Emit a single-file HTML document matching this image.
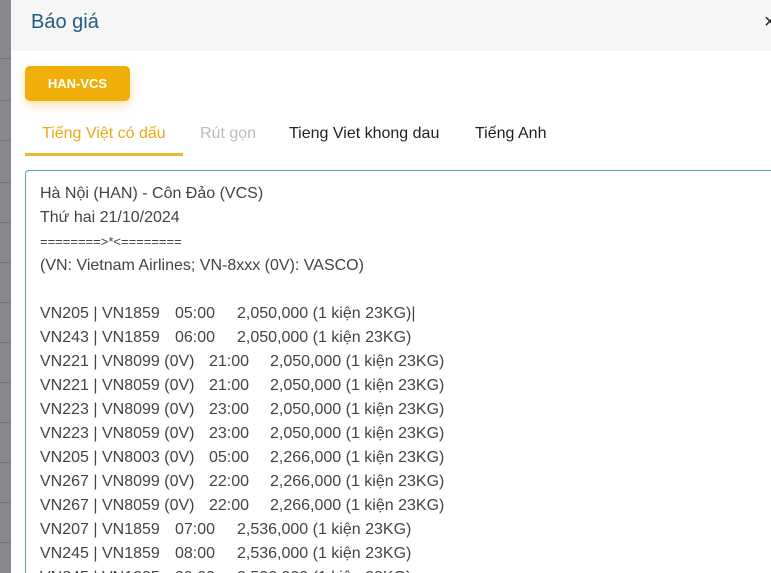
<!DOCTYPE html>
<html style="width:771px;height:573px;overflow:hidden"><head><meta charset="utf-8"><style>
*{margin:0;padding:0;box-sizing:border-box}
body{width:771px;height:573px;overflow:hidden;background:#fff;position:relative;font-family:"Liberation Sans",sans-serif}
.strip{position:absolute;left:0;top:0;width:11px;height:573px;background:#86888b}
.strip i{position:absolute;left:0;width:11px;height:1px;background:#707274}
.hdr{position:absolute;left:11px;top:0;width:760px;height:51px;background:#f6f6f6}
.title{position:absolute;left:31px;top:11px;font-size:20px;color:#1f5e7e}
.x{position:absolute;left:764px;top:11px;font-size:20px;color:#222}
.btn{position:absolute;left:25px;top:66px;width:105px;height:35px;background:#f0ae0a;border-radius:5px;color:#fff;font-weight:bold;font-size:13px;text-align:center;line-height:35px;box-shadow:0 4px 10px rgba(240,174,10,.35)}
.tab{position:absolute;top:125px;font-size:16px}
.ul{position:absolute;left:25px;top:153px;width:158px;height:3px;background:#ecb83a}
.box{position:absolute;left:25px;top:170px;width:780px;height:420px;border:1px solid #5b9cc4;border-radius:4px}
.l{position:absolute;font-size:16px;color:#444;white-space:pre;line-height:18px}
</style></head><body>
<div class="strip"><i style="top:58px"></i><i style="top:100px"></i><i style="top:140px"></i><i style="top:182px"></i><i style="top:222px"></i><i style="top:262px"></i><i style="top:302px"></i><i style="top:342px"></i><i style="top:382px"></i><i style="top:422px"></i><i style="top:462px"></i><i style="top:502px"></i><i style="top:542px"></i></div>
<div class="hdr"></div>
<div class="title">Báo giá</div>
<div class="x">×</div>
<div class="btn">HAN-VCS</div>
<div class="tab" style="left:42px;color:#eaa915">Tiếng Việt có dấu</div>
<div class="tab" style="left:200px;color:#b8bcc2">Rút gọn</div>
<div class="tab" style="left:289px;color:#222">Tieng Viet khong dau</div>
<div class="tab" style="left:475px;color:#222">Tiếng Anh</div>
<div class="ul"></div>
<div class="box"></div>
<div class="l" style="left:40px;top:185px">Hà Nội (HAN) - Côn Đảo (VCS)</div>
<div class="l" style="left:40px;top:209px">Thứ hai 21/10/2024</div>
<div class="l" style="left:40px;top:233px;font-size:13px">========&gt;*&lt;========</div>
<div class="l" style="left:40px;top:257px">(VN: Vietnam Airlines; VN-8xxx (0V): VASCO)</div>
<div id="rows"></div>
<script>
var rows=[
["VN205 | VN1859","05:00","2,050,000 (1 kiện 23KG)|",0],
["VN243 | VN1859","06:00","2,050,000 (1 kiện 23KG)",0],
["VN221 | VN8099 (0V)","21:00","2,050,000 (1 kiện 23KG)",1],
["VN221 | VN8059 (0V)","21:00","2,050,000 (1 kiện 23KG)",1],
["VN223 | VN8099 (0V)","23:00","2,050,000 (1 kiện 23KG)",1],
["VN223 | VN8059 (0V)","23:00","2,050,000 (1 kiện 23KG)",1],
["VN205 | VN8003 (0V)","05:00","2,266,000 (1 kiện 23KG)",1],
["VN267 | VN8099 (0V)","22:00","2,266,000 (1 kiện 23KG)",1],
["VN267 | VN8059 (0V)","22:00","2,266,000 (1 kiện 23KG)",1],
["VN207 | VN1859","07:00","2,536,000 (1 kiện 23KG)",0],
["VN245 | VN1859","08:00","2,536,000 (1 kiện 23KG)",0],
["VN245 | VN1235","09:00","2,536,000 (1 kiện 23KG)",0]];
var h="";rows.forEach(function(r,i){var t=305+i*24;var a=r[3]?[209,270]:[175,237];
h+='<div class="l" style="left:40px;top:'+t+'px">'+r[0]+'</div><div class="l" style="left:'+a[0]+'px;top:'+t+'px">'+r[1]+'</div><div class="l" style="left:'+a[1]+'px;top:'+t+'px">'+r[2]+'</div>';});
document.getElementById("rows").innerHTML=h;
</script>
</body></html>
